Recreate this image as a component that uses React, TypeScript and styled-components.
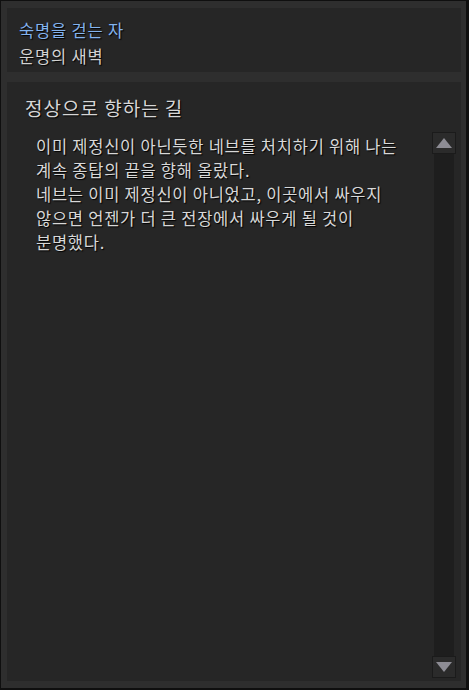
import React from "react";
import styled, { createGlobalStyle } from "styled-components";

const Global = createGlobalStyle`
  html, body {
    margin: 0;
    padding: 0;
    background: #111;
  }
  body {
    font-family: "Noto Sans CJK KR", "Noto Sans", sans-serif;
  }
`;

const Frame = styled.div`
  width: 469px;
  height: 690px;
  box-sizing: border-box;
  background: #2e2e2e;
  border: solid #0f0f0f;
  border-width: 1px 3px 2px 1px;
  padding: 7px 5px 7px 6px;
  display: flex;
  flex-direction: column;
  gap: 10px;
`;

const Panel = styled.div`
  background: #262626;
`;

const Header = styled(Panel)`
  height: 64px;
  box-sizing: border-box;
  padding: 9px 12px 0;
  display: flex;
  flex-direction: column;
`;

const Line = styled.div<{ $accent?: boolean }>`
  font-size: 16.5px;
  letter-spacing: 0.8px;
  line-height: 26px;
  color: ${(p) => (p.$accent ? "#83b3ee" : "#d2d2d2")};
  text-shadow: 1px 1px 1px #000;
  white-space: nowrap;
`;

const Quest = styled(Panel)`
  flex: 1;
  display: flex;
  flex-direction: column;
  padding: 14px 5px 3px 18px;
  min-height: 0;
`;

const Title = styled.div`
  font-size: 19px;
  letter-spacing: 1px;
  line-height: 24px;
  color: #d6d6d6;
  text-shadow: 1px 1px 1px #000;
  white-space: nowrap;
`;

const Body = styled.div`
  flex: 1;
  display: flex;
  margin-top: 12px;
  min-height: 0;
`;

const Text = styled.div`
  flex: 1;
  padding: 2px 0 0 11px;
  font-size: 16.5px;
  letter-spacing: 0.75px;
  line-height: 24px;
  color: #d8d8d8;
  text-shadow: 1px 1px 1px #000;
  white-space: pre;
`;

const Scrollbar = styled.div`
  width: 24px;
  display: flex;
  flex-direction: column;
  align-items: center;
`;

const Track = styled.div`
  flex: 1;
  width: 20px;
  background: #1e1e1e;
`;

const Arrow = styled.div`
  width: 24px;
  height: 22px;
  box-sizing: border-box;
  background: #2b2b2b;
  border: 1px solid #1b1b1b;
  display: flex;
  align-items: center;
  justify-content: center;
`;

const ArrowButton = ({ dir }: { dir: "up" | "down" }) => (
  <Arrow>
    <svg width="16" height="10" viewBox="0 0 16 10">
      <polygon
        points={dir === "up" ? "8,0 16,10 0,10" : "0,0 16,0 8,10"}
        fill="#8d8c94"
      />
    </svg>
  </Arrow>
);

const story = `이미 제정신이 아닌듯한 네브를 처치하기 위해 나는
계속 종탑의 끝을 향해 올랐다.
네브는 이미 제정신이 아니었고, 이곳에서 싸우지
않으면 언젠가 더 큰 전장에서 싸우게 될 것이
분명했다.`;

const App = () => {
  return (
    <>
      <Global />
      <Frame>
        <Header>
          <Line $accent>숙명을 걷는 자</Line>
          <Line>운명의 새벽</Line>
        </Header>
        <Quest>
          <Title>정상으로 향하는 길</Title>
          <Body>
            <Text>{story}</Text>
            <Scrollbar>
              <ArrowButton dir="up" />
              <Track />
              <ArrowButton dir="down" />
            </Scrollbar>
          </Body>
        </Quest>
      </Frame>
    </>
  );
};

export default App;
